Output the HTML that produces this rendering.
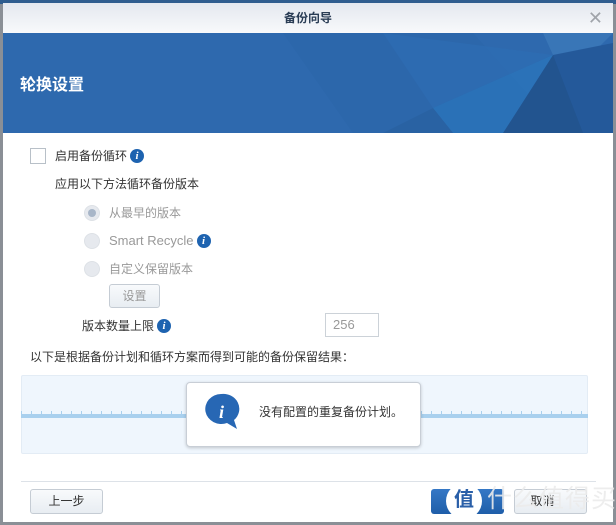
<!DOCTYPE html>
<html><head><meta charset="utf-8"><style>
*{margin:0;padding:0;box-sizing:border-box}
body{width:616px;height:525px;overflow:hidden;background:#8a8f96;font-family:"Liberation Sans","Noto Sans CJK SC",sans-serif;position:relative}
.top{position:absolute;left:0;top:0;width:616px;height:4px;background:#2f5d8f}
.dlg{position:absolute;left:3px;top:3px;width:610px;height:519px;background:#fff}
.title{height:30px;background:linear-gradient(#e4e8ef,#f8f9fb);text-align:center;font-size:12px;line-height:30px;color:#2a3d55;font-weight:bold;position:relative}
.x{position:absolute;right:10px;top:0;color:#a0a4aa;font-size:18px;font-weight:normal}
.ban{position:absolute;top:30px;left:0;width:610px;height:100px;background:#2e69ae;overflow:hidden}
.ban h1{position:absolute;left:17px;top:38px;color:#fff;font-size:16px;font-weight:bold}
.t{position:absolute;font-size:12px;color:#333;white-space:nowrap;line-height:16px}
.g{color:#999}
.info{display:inline-block;width:14px;height:14px;border-radius:50%;background:#1e63b0;color:#fff;font:italic bold 11px/14px "Liberation Serif",serif;text-align:center;vertical-align:top;margin-top:1px;margin-left:3px}
.radio{position:absolute;width:16px;height:16px;border-radius:50%;background:#e6e9ee;border:1px solid #dde1e6}
.btn{position:absolute;border:1px solid #c5ccd4;border-radius:3px;background:linear-gradient(#f8fafc,#e8edf2);font-size:12px;color:#333;text-align:center}
</style></head><body>
<div class="top"></div>
<div class="dlg">
<div class="title">备份向导<span class="x">✕</span></div>
<div class="ban">
<svg width="610" height="100" style="position:absolute;left:0;top:0">
<polygon points="280,0 470,0 560,100 350,100" fill="#2c67ab"/>
<polygon points="380,0 550,22 430,75" fill="#2d6eb3" opacity=".7"/>
<polygon points="540,0 610,0 590,20 550,22" fill="#3e7cba" opacity=".7"/>
<polygon points="550,22 610,10 610,100 560,100" fill="#24599a"/>
<polygon points="550,22 500,100 580,100" fill="#22548f"/>
<polygon points="430,75 550,22 500,100 450,100" fill="#2a74ba" opacity=".8"/>
<polygon points="380,100 430,75 450,100" fill="#2962a3"/>
</svg>
<h1>轮换设置</h1></div>
<div style="position:absolute;left:27px;top:145px;width:16px;height:16px;border:1px solid #b8c0c8;background:#fff"></div>
<div class="t" style="left:52px;top:145px">启用备份循环<span class="info">i</span></div>
<div class="t" style="left:52px;top:173px">应用以下方法循环备份版本</div>
<div class="radio" style="left:81px;top:202px"><div style="width:8px;height:8px;border-radius:50%;background:#a8b6c8;margin:3px"></div></div>
<div class="t g" style="left:106px;top:202px">从最早的版本</div>
<div class="radio" style="left:81px;top:230px"></div>
<div class="t g" style="left:106px;top:230px;font-size:13px">Smart Recycle<span class="info">i</span></div>
<div class="radio" style="left:81px;top:258px"></div>
<div class="t g" style="left:106px;top:258px">自定义保留版本</div>
<div class="btn" style="left:106px;top:281px;width:51px;height:24px;line-height:22px;color:#999">设置</div>
<div class="t" style="left:79px;top:315px">版本数量上限<span class="info">i</span></div>
<div style="position:absolute;left:322px;top:310px;width:54px;height:24px;border:1px solid #ccd2d8;color:#999;font-size:13px;line-height:22px;padding-left:7px">256</div>
<div class="t" style="left:27px;top:346px">以下是根据备份计划和循环方案而得到可能的备份保留结果：</div>
<div style="position:absolute;left:18px;top:372px;width:567px;height:79px;background:#eff6fd;border:1px solid #e3ecf5;border-radius:2px"></div>
<div style="position:absolute;left:18px;top:411px;width:567px;height:4px;background:#a9d0ee"></div>
<div style="position:absolute;left:18px;top:408px;width:567px;height:3px;background:repeating-linear-gradient(90deg,#a9d0ee 0 1px,transparent 1px 10px)"></div>
<div style="position:absolute;left:183px;top:379px;width:235px;height:65px;background:#fff;border:1px solid #c8ced6;border-radius:4px;box-shadow:0 1px 3px rgba(0,0,0,.2)"></div>
<svg style="position:absolute;left:201px;top:390px" width="38" height="38"><path d="M17 1a16 15 0 1 0 6 29l10 6-3-9A16 15 0 0 0 17 1z" fill="#2767b4"/><text x="15" y="25" fill="#fff" font-family="Liberation Serif" font-style="italic" font-weight="bold" font-size="18">i</text></svg>
<div class="t" style="left:256px;top:401px">没有配置的重复备份计划。</div>
<div style="position:absolute;left:18px;top:478px;width:575px;height:1px;background:#dde2e8"></div>
<div class="btn" style="left:27px;top:486px;width:73px;height:25px;line-height:23px">上一步</div>
<div style="position:absolute;left:428px;top:486px;width:73px;height:25px;border-radius:3px;background:linear-gradient(#3578c6,#1f5ea9)"></div>
<div class="btn" style="left:511px;top:486px;width:73px;height:25px;line-height:23px"><span style="position:relative;left:-8px">取消</span></div>
<div style="position:absolute;left:443px;top:480px;width:36px;height:36px;border-radius:50%;background:#fff;color:#2a5fa8;font-size:20px;text-align:center;line-height:34px;font-weight:bold">值</div>
<div class="t" style="left:484px;top:480px;font-size:25px;line-height:32px;color:rgba(235,235,235,.9);letter-spacing:1px">什么值得买</div>
</div>
</body></html>
